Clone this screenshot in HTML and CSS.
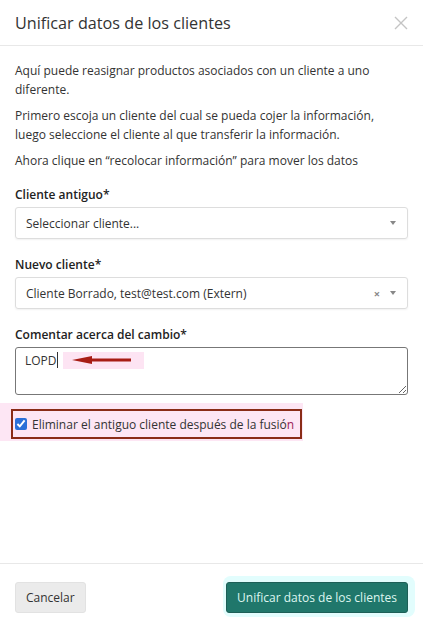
FILE: index.html
```html
<!DOCTYPE html>
<html lang="es">
<head>
  <meta charset="UTF-8" />
  <meta name="viewport" content="width=device-width, initial-scale=1.0"/>
  <title>Unificar datos de los clientes</title>
  <link rel="stylesheet" href="styles.css">
</head>
<body>
  <div class="modal">
    <div class="modal-header">
      <h2>Unificar datos de los clientes</h2>
      <button class="close" aria-label="Cerrar">
        <svg width="14" height="14" viewBox="0 0 14 14"><path d="M1 1L13 13M13 1L1 13" stroke="#c4c4c4" stroke-width="1.4" fill="none"/></svg>
      </button>
    </div>

    <div class="modal-body">
      <p>Aquí puede reasignar productos asociados con un cliente a uno diferente.</p>
      <p>Primero escoja un cliente del cual se pueda cojer la información, luego seleccione el cliente al que transferir la información.</p>
      <p>Ahora clique en “recolocar información” para mover los datos</p>

      <div class="field">
        <label>Cliente antiguo*</label>
        <div class="select">
          <span class="value">Seleccionar cliente...</span>
          <span class="caret"></span>
        </div>
      </div>

      <div class="field">
        <label>Nuevo cliente*</label>
        <div class="select">
          <span class="value">Cliente Borrado, test@test.com (Extern)</span>
          <span class="clear">×</span>
          <span class="caret"></span>
        </div>
      </div>

      <div class="field">
        <label>Comentar acerca del cambio*</label>
        <div class="textarea-wrap">
          <textarea>LOPD</textarea>
          <span class="caret-line"></span>
          <div class="mark-arrow">
            <svg width="60" height="14" viewBox="0 0 60 14"><path d="M17 7H59" stroke="#a81d15" stroke-width="3" fill="none"/><path d="M0 7L20 3V11Z" fill="#a81d15"/></svg>
          </div>
        </div>
      </div>

      <div class="check-row">
        <div class="mark-box"></div>
        <label class="check"><input type="checkbox" checked><span>Eliminar el antiguo cliente después de la fusió<span class="tail">n</span></span></label>
      </div>
    </div>

    <div class="modal-footer">
      <button class="btn">Cancelar</button>
      <button class="btn primary">Unificar datos de los clientes</button>
    </div>
  </div>
</body>
</html>
```

FILE: styles.css
```css
body {
  margin: 0;
  font-family: "Open Sans", Arial, sans-serif;
  background-color: #fff;
  color: #333;
}
.modal {
  width: 423px;
  height: 627px;
  display: flex;
  flex-direction: column;
}
.modal-header {
  display: flex;
  align-items: center;
  justify-content: space-between;
  padding: 12px 15px 11px 15px;
  border-bottom: 1px solid #e8e8e8;
}
.modal-header h2 {
  margin: 0;
  font-size: 16.2px;
  font-weight: 400;
  line-height: 22px;
  color: #333;
}
.close {
  background: none;
  border: none;
  padding: 0;
  display: flex;
}
.modal-body {
  flex: 1;
  padding: 15px 15px 0;
  font-size: 12px;
  line-height: 19px;
}
.modal-body p {
  margin: 0 0 7px;
  max-width: 380px;
}
.field {
  margin-top: 15px;
}
.field + .field {
  margin-top: 16px;
}
.field label {
  display: block;
  font-weight: 600;
  color: #222;
  margin-bottom: 3px;
}
.select {
  display: flex;
  align-items: center;
  height: 30px;
  padding: 0 10px;
  border: 1px solid #ddd;
  border-radius: 3px;
  box-shadow: 0 1px 2px rgba(0, 0, 0, 0.06);
  color: #333;
}
.select .value {
  flex: 1;
}
.clear {
  color: #888;
  font-size: 11px;
  font-weight: 700;
  margin-right: 10px;
}
.caret {
  width: 0;
  height: 0;
  border-left: 3px solid transparent;
  border-right: 3px solid transparent;
  border-top: 4px solid #888;
  margin-right: 1px;
}
.textarea-wrap {
  position: relative;
}
textarea {
  display: block;
  box-sizing: border-box;
  width: 100%;
  height: 48px;
  margin: 0;
  padding: 3px 9px;
  border: 1px solid #777;
  border-radius: 3px;
  font-family: inherit;
  font-size: 12px;
  line-height: 19px;
  color: #333;
  resize: vertical;
}
.caret-line {
  position: absolute;
  left: 42px;
  top: 5px;
  width: 1px;
  height: 16px;
  background: #333;
}
.mark-arrow {
  position: absolute;
  left: 48px;
  top: 5px;
  padding: 1px 12px 2px 9px;
  background: #fde4f3;
  display: flex;
}
.check-row {
  position: relative;
  margin: 8px 0 0 -15px;
  width: 303px;
  padding: 6px 0 2px;
  background: #fde6f4;
}
.mark-box {
  position: absolute;
  left: 11px;
  top: 6px;
  right: 1px;
  bottom: 2px;
  border: 2px solid #8a2c17;
}
.check {
  position: relative;
  display: flex;
  align-items: center;
  height: 30px;
  padding-left: 15px;
  color: #333;
  font-size: 12px;
  white-space: nowrap;
}
.check input {
  flex: none;
  width: 12px;
  height: 12px;
  margin: 0 5px 0 0;
  accent-color: #2b6fd8;
}
.tail {
  color: #9a1a55;
}
.modal-footer {
  display: flex;
  justify-content: space-between;
  align-items: center;
  padding: 18px 15px 14px;
  border-top: 1px solid #e8e8e8;
}
.btn {
  height: 31px;
  padding: 0 10px;
  border: 1px solid #e2e2e2;
  border-radius: 3px;
  background-color: #ebebeb;
  color: #333;
  font-family: inherit;
  font-size: 12px;
}
.btn.primary {
  background-color: #20776b;
  border-color: #1d5f57;
  color: #def6f0;
  box-shadow: 2px -1px 0 5px #e2fdfd;
}
```
